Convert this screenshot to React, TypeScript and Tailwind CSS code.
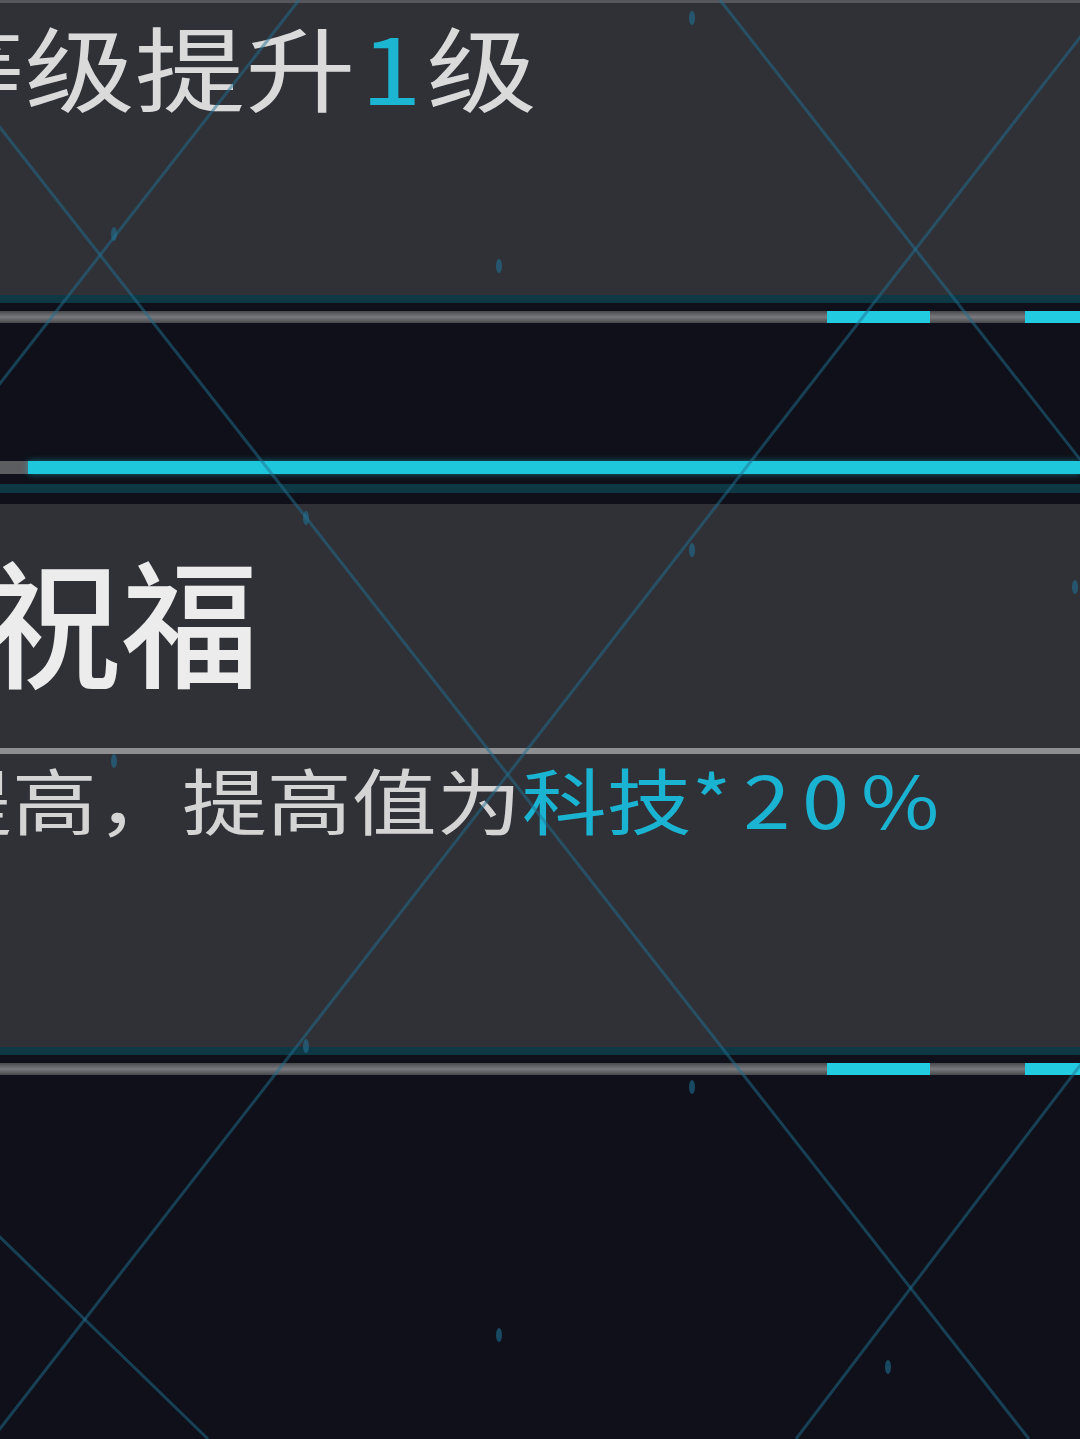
import type { ReactNode } from "react";

const CJK = "font-['Noto_Sans_CJK_SC','Noto_Sans',sans-serif]";

// lattice strands that run across the whole screen
const STRANDS: [number, number, number, number][] = [
  [-100, 0, 1029, 1439],
  [1109, 0, -8, 1439],
  [299, 0, -200, 640],
  [720, 0, 1300, 740],
  [-200, 1043, 208, 1439],
  [1300, 776, 796, 1439],
];

const NODES: [number, number][] = [
  [692, 18],
  [114, 234],
  [499, 266],
  [306, 518],
  [692, 550],
  [1075, 587],
  [114, 761],
  [692, 1087],
  [306, 1046],
  [499, 1335],
  [888, 1367],
];

function NetworkOverlay() {
  return (
    <svg
      className="pointer-events-none absolute inset-0 h-full w-full"
      viewBox="0 0 1080 1439"
      preserveAspectRatio="none"
    >
      {STRANDS.map(([x1, y1, x2, y2], i) => (
        <line key={i} x1={x1} y1={y1} x2={x2} y2={y2} stroke="#1f6f92" strokeOpacity={0.5} strokeWidth={3} />
      ))}
      {NODES.map(([cx, cy], i) => (
        <ellipse key={i} cx={cx} cy={cy} rx={3} ry={7} fill="#1f6f92" fillOpacity={0.6} />
      ))}
    </svg>
  );
}

// teal rim + grey rail with two lit segments, sits under each card
function CardFooter() {
  return (
    <div className="flex flex-col">
      <div className="h-[8px] bg-[#0f3845]" />
      <div className="h-[8px]" />
      <div className="flex h-[12px]">
        <div className="w-[827px] bg-gradient-to-b from-[#48494d] via-[#7a7a7e] to-[#48494d]" />
        <div className="w-[103px] bg-[#22cbe0]" />
        <div className="w-[95px] bg-gradient-to-b from-[#48494d] via-[#7a7a7e] to-[#48494d]" />
        <div className="flex-1 bg-[#22cbe0]" />
      </div>
    </div>
  );
}

function Card({ className, children }: { className: string; children: ReactNode }) {
  return <section className={`overflow-hidden bg-[#303137] ${className}`}>{children}</section>;
}

export default function App() {
  return (
    <div className={`relative flex h-[1439px] w-[1080px] flex-col overflow-hidden bg-[#0f1019] ${CJK}`}>
      <Card className="h-[295px] border-t-[3px] border-[#56575c] pt-[16px]">
        <div className="ml-[-86px] whitespace-nowrap">
          <span className="inline-block origin-left scale-x-[1.2] text-[92px] leading-none font-normal text-[#dadada]">
            等级提升<span className="mx-[4px] text-[#1cb6d2]">1</span>级
          </span>
        </div>
      </Card>
      <CardFooter />

      <div className="h-[138px]" />

      {/* progress rail */}
      <div className="flex h-[13px]">
        <div className="w-[28px] bg-[#5c5d61]" />
        <div className="flex-1 bg-[#1fc7dc] shadow-[0_0_6px_rgba(31,199,220,0.5)]" />
      </div>
      <div className="h-[10px]" />
      <div className="h-[9px] bg-[#0f3845]" />
      <div className="h-[11px]" />

      <Card className="h-[543px] pt-[44px]">
        <div className="ml-[-17px] whitespace-nowrap">
          <span className="inline-block text-[138px] leading-none font-medium text-[#ececec]">祝福</span>
        </div>
        <div className="mt-[62px] h-[6px] bg-[#8e8f93]" />
        <div className="mt-[8px] ml-[-73px] whitespace-nowrap">
          <span className="inline-block origin-left scale-x-[1.18] text-[72px] leading-none text-[#d4d4d4]">
            提高，提高值为
            <span className="text-[#1ab4d2]">
              科技<span className="tracking-[10px]">*20%</span>
            </span>
          </span>
        </div>
      </Card>
      <CardFooter />

      <div className="flex-1" />

      <NetworkOverlay />
    </div>
  );
}
